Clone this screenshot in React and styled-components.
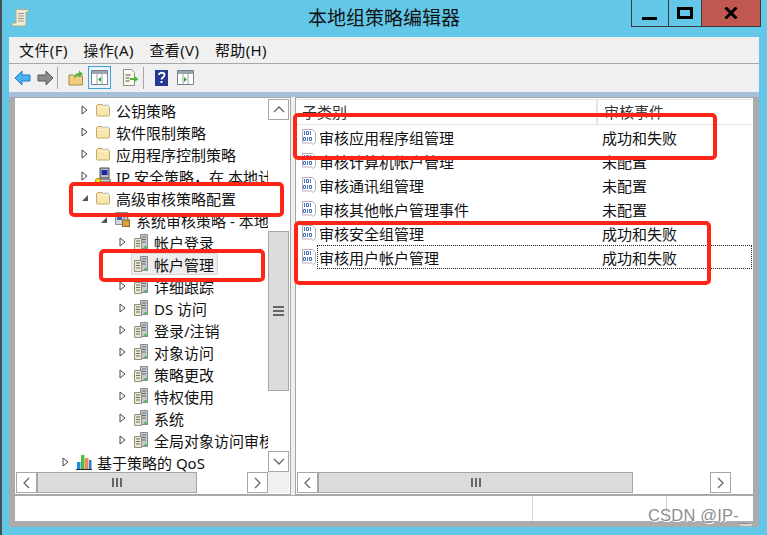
import React from 'react';
import styled, { createGlobalStyle } from 'styled-components';

const GlobalStyle = createGlobalStyle`
html, body { margin: 0; padding: 0; background: #63c8e8; }
* { box-sizing: border-box; }
`;

const Page = styled.div`
position: relative;
width: 767px;
height: 535px;
overflow: hidden;
background: #63c8e8;
border-left: 2px solid #4a4f52;
font-family: "Noto Sans", "Noto Sans CJK SC", sans-serif;
color: #111;
`;

const TitleBar = styled.div`
height: 37px;
display: grid;
grid-template-columns: 297px auto 1fr;
padding-left: 9px;
`;

const AppIcon = styled.div`
padding-top: 8px;
`;

const Title = styled.div`
font-size: 19px;
line-height: 37px;
color: #111;
`;

const WinButtons = styled.div`
justify-self: end;
margin-right: 6px;
height: 27px;
display: flex;
border: 1px solid #3f3a3a;
border-top: none;
`;

const WinButton = styled.div`
width: ${p => p.$w}px;
display: flex;
align-items: center;
justify-content: center;
background: ${p => p.$close ? '#c0584f' : 'transparent'};
border-left: ${p => p.$first ? 'none' : '1px solid #3f3a3a'};
`;

const Client = styled.div`
margin-left: 7px;
width: 750px;
height: 490px;
background: #f0f0f0;
display: flex;
flex-direction: column;
`;

const MenuBar = styled.div`
height: 27px;
display: flex;
gap: 15.5px;
align-items: center;
padding-left: 10px;
font-size: 15px;
letter-spacing: 0.4px;
border-bottom: 1px solid #a9a9a9;
`;

const ToolBar = styled.div`
height: 29px;
display: flex;
align-items: center;
padding-left: 3px;
`;

const ToolSlot = styled.div`
width: ${p => p.$w}px;
height: 23px;
margin-left: ${p => p.$ml || 0}px;
display: flex;
align-items: center;
justify-content: center;
border: ${p => p.$active ? '1px solid #3ea3dc' : 'none'};
background: ${p => p.$active ? '#e8f3fa' : 'transparent'};
`;

const ToolSep = styled.div`
width: 1px;
height: 22px;
margin-left: 1px;
background: #a6a6a6;
`;

const Band = styled.div`
height: 5px;
background: #a5bfdc;
`;

const Frame = styled.div`
flex: 1;
display: flex;
flex-direction: column;
background: #ababab;
padding: 0 5px 6px;
`;

const Panes = styled.div`
height: 398px;
display: flex;
gap: 4px;
background: #f0f0f0;
`;

const Pane = styled.div`
width: ${p => p.$w}px;
display: grid;
grid-template-columns: 1fr 21px;
grid-template-rows: 1fr 21px;
border: 1px solid #a6a6a6;
padding: 1px;
background: #fff;
`;

const TreeBody = styled.div`
overflow: hidden;
min-width: 0;
`;

const TreeRow = styled.div`
height: 22px;
display: flex;
align-items: center;
white-space: nowrap;
font-size: 15px;
padding-left: ${p => 46 + p.$level * 19}px;
`;

const ArrowSlot = styled.div`
width: 12px;
flex: none;
display: flex;
align-items: center;
`;

const TreeItem = styled.div`
height: 22px;
display: flex;
align-items: center;
gap: 5px;
padding: 0 3px 0 1px;
border: 1px solid ${p => p.$selected ? '#d9d9d9' : 'transparent'};
background: ${p => p.$selected ? '#eeeeee' : 'transparent'};
`;

const VScroll = styled.div`
display: flex;
flex-direction: column;
background: #fff;
`;

const HScroll = styled.div`
display: flex;
background: #fff;
min-width: 0;
`;

const ScrollBtn = styled.div`
flex: none;
width: 21px;
height: 21px;
display: flex;
align-items: center;
justify-content: center;
background: #fff;
border: 1px solid #a6a6a6;
`;

const Track = styled.div`
flex: 1;
background: #fff;
min-width: 0;
min-height: 0;
`;

const Thumb = styled.div`
flex: none;
display: flex;
align-items: center;
justify-content: center;
gap: 2px;
flex-direction: ${p => p.$vertical ? 'column' : 'row'};
width: ${p => p.$vertical ? '21px' : `${p.$size}px`};
height: ${p => p.$vertical ? `${p.$size}px` : '21px'};
margin-top: ${p => p.$vertical ? p.$offset : 0}px;
background: #dcdcdc;
border: 1px solid #a6a6a6;
`;

const Grip = styled.span`
display: block;
background: #666;
width: ${p => p.$vertical ? '11px' : '2px'};
height: ${p => p.$vertical ? '2px' : '9px'};
`;

const Corner = styled.div`
background: #f0f0f0;
`;

const ListBody = styled.div`
min-width: 0;
display: flex;
flex-direction: column;
grid-column: 1 / 3;
font-size: 15px;
`;

const ListHead = styled.div`
height: 26px;
display: grid;
grid-template-columns: 299px 1fr;
align-items: center;
border: 1px solid #e3e3e3;
border-width: 1px 0;
color: #333;
`;

const HeadCell = styled.div`
height: 100%;
line-height: 24px;
padding-left: ${p => p.$pad}px;
border-left: ${p => p.$divided ? '2px solid #e3e3e3' : 'none'};
`;

const ListRow = styled.div`
position: relative;
height: 24px;
display: grid;
grid-template-columns: 301px 1fr;
align-items: center;
padding-left: 4px;
${p => p.$focused && `
&::after {
  content: "";
  position: absolute;
  inset: 0 0 0 20px;
  border: 1px dotted #222;
}
`}
`;

const ListName = styled.div`
display: flex;
align-items: center;
gap: 2px;
`;

const StatusBar = styled.div`
height: 25px;
margin: 1px 1px 0;
background: #fff;
display: grid;
grid-template-columns: 518px 134px 1fr;
`;

const StatusCell = styled.div`
border-right: ${p => p.$last ? 'none' : '1px solid #d6d6d6'};
`;

const RedBox = styled.div`
position: absolute;
left: ${p => p.$x}px;
top: ${p => p.$y}px;
width: ${p => p.$w}px;
height: ${p => p.$h}px;
border: 4px solid #ff2618;
border-radius: 5px;
pointer-events: none;
`;

const Watermark = styled.div`
position: absolute;
left: 646px;
top: 506px;
font-family: "Liberation Sans", sans-serif;
font-size: 16.5px;
letter-spacing: 0.2px;
color: #8d8d8d;
text-shadow: 1px 1px 0 #fff;
`;

const ResizeGrip = styled.div`
position: absolute;
left: 740px;
top: 524px;
width: 10px;
height: 2px;
background: #d4d4d4;
`;

const AppGlyph = () => (
  <svg width="19" height="20" viewBox="0 0 19 20">
    <path d="M5 1.500h11.500c1.500 0 1.500 2.500 0 2.500H15v11c0 2-1 3-2.500 3h-10c-2 0-2-3 0-3H5z" fill="#f3ecd2" stroke="#b5aa8a" />
    <path d="M7 5h6v1H7zM7 7.500h6v1H7zM7 10h6v1H7zM7 12.500h6v1H7z" fill="#8f959a" />
  </svg>
);

const FolderIcon = () => (
  <svg width="16" height="16" viewBox="0 0 16 16">
    <path d="M1.500 3.500l1-1h5l1 1h5l1 1v9l-1 .5h-11l-1-.5z" fill="#f9e5ae" stroke="#c4a86c" />
    <path d="M9 2.500h4.500v1.500H9z" fill="#b9d3e6" />
    <path d="M2.500 5.500h11" stroke="#fdf3d3" />
  </svg>
);

const ServerIcon = () => (
  <svg width="16" height="18" viewBox="0 0 16 18">
    <path d="M7.500 1.500h7v14h-7z" fill="#c3c9cd" stroke="#858b90" />
    <path d="M1.500 5.500h7v11h-7z" fill="#f0e8cc" stroke="#8f8f82" />
    <path d="M9 4h4M9 6.500h4M9 9h4M3 8h4M3 10.500h4M3 13h4" stroke="#666d72" />
    <rect x="11.500" y="13" width="2" height="2" fill="#35b53a" />
  </svg>
);

// paper with two rows of bits, 101 over 010
const BinaryIcon = () => (
  <svg width="16" height="18" viewBox="0 0 16 18">
    <path d="M1.500 1.500h10l3 3v10l-2.500 2-1.500-1.500h-9z" fill="#fff" stroke="#b0b0b0" />
    <path
      d="M3.500 3v4M5.500 3.500h2v3h-2zM9.500 3v4M2.500 9.500h2v3h-2zM6.500 9v4M8.500 9.500h2v3h-2z"
      fill="none"
      stroke="#4a72c8"
    />
  </svg>
);

const SecurityIcon = () => (
  <svg width="16" height="18" viewBox="0 0 16 18">
    <path d="M5 1h9v10H5z" fill="#b9bfc4" stroke="#444" />
    <rect x="6.500" y="3" width="6" height="5" fill="#1a2aa6" />
    <path d="M4 12h11v3H4z" fill="#cfd3d6" stroke="#555" />
    <circle cx="3" cy="14" r="2.600" fill="#f5e21a" stroke="#a89a10" />
  </svg>
);

const AuditIcon = () => (
  <svg width="17" height="18" viewBox="0 0 17 18">
    <path d="M1.500 1.500h12v12h-12z" fill="#d4d6d8" stroke="#8b8f92" />
    <rect x="3" y="4" width="5" height="5" fill="#3a63b8" />
    <rect x="8.500" y="9" width="7" height="6.500" fill="#d5a63c" stroke="#8a6a1e" />
    <path d="M10 9V7.500a2 2 0 0 1 4 0V9" fill="none" stroke="#6e6e6e" />
  </svg>
);

const QosIcon = () => (
  <svg width="16" height="16" viewBox="0 0 16 16">
    <rect x="1" y="8" width="3.500" height="7" fill="#1d8fdb" />
    <rect x="5" y="1" width="3.500" height="14" fill="#53b947" />
    <rect x="9" y="4" width="3.500" height="11" fill="#f08a5d" />
    <rect x="13" y="6" width="2.500" height="9" fill="#2b7fc8" />
    <path d="M0 15.500h16" stroke="#222" />
  </svg>
);

const Expander = ({ open }) => (
  open ? (
    <svg width="8" height="8" viewBox="0 0 8 8"><path d="M7 1v6H1z" fill="#555" /></svg>
  ) : (
    <svg width="7" height="10" viewBox="0 0 7 10"><path d="M1 1l5 4-5 4z" fill="#fff" stroke="#444" /></svg>
  )
);

const Chevron = ({ dir }) => {
  const d = {
    up: 'M2 8l5-5 5 5',
    down: 'M2 3l5 5 5-5',
    left: 'M7 1L2 6l5 5',
    right: 'M2 1l5 5-5 5',
  }[dir];
  const horizontal = dir === 'left' || dir === 'right';
  return (
    <svg width={horizontal ? 9 : 14} height={horizontal ? 12 : 11} viewBox={horizontal ? '0 0 9 12' : '0 0 14 11'}>
      <path d={d} fill="none" stroke="#666" strokeWidth="1.300" />
    </svg>
  );
};

const ArrowButton = ({ color, dir }) => (
  <svg width="17" height="16" viewBox="0 0 17 16">
    <path
      d={dir === 'left' ? 'M1 8l7-7v4h8v6H8v4z' : 'M16 8L9 1v4H1v6h8v4z'}
      fill={color}
      stroke={dir === 'left' ? '#1c7fc4' : '#5a5a5a'}
    />
  </svg>
);

const PanelIcon = ({ flip }) => (
  <svg width="17" height="15" viewBox="0 0 17 15">
    <path d="M.5 .5h16v14H.5z" fill="#fff" stroke="#77808a" />
    <path d="M1 1h15v3H1z" fill="#9aa4ad" />
    <path d="M6 4v10M11 4v10" stroke="#9aa4ad" />
    <path d={flip ? 'M7 7l3 2.500L7 12z' : 'M10 7L7 9.500l3 2.500z'} fill="#2fa52f" />
  </svg>
);

const UpFolderIcon = () => (
  <svg width="16" height="17" viewBox="0 0 16 17">
    <path d="M1 6h5l1 1h7.500v9H1z" fill="#f0cf7c" stroke="#a78d4c" />
    <path d="M6 10c0-4 2-6 5-6V1.500L15 5l-4 3.500V6.500c-2 0-4 1-5 3.500z" fill="#4fb83e" />
  </svg>
);

const ExportIcon = () => (
  <svg width="17" height="17" viewBox="0 0 17 17">
    <path d="M1.500 .5h8l3 3v13h-11z" fill="#fbf8e8" stroke="#8d8d8d" />
    <path d="M3.500 6h5M3.500 9h4M3.500 12h4" stroke="#555" />
    <path d="M8 9h4V6.500l4.500 3.500-4.500 3.500V11H8z" fill="#4fb83e" />
  </svg>
);

const HelpIcon = () => (
  <svg width="13" height="16" viewBox="0 0 13 16">
    <rect width="13" height="16" fill="#24398f" />
    <path d="M4 5c0-3 5.500-3 5.500 0 0 2-3 2.500-3 4.500" fill="none" stroke="#fff" strokeWidth="1.800" />
    <rect x="5.500" y="11" width="2" height="2" fill="#fff" />
  </svg>
);

const treeRows = [
  { level: 1, label: '公钥策略', icon: FolderIcon },
  { level: 1, label: '软件限制策略', icon: FolderIcon },
  { level: 1, label: '应用程序控制策略', icon: FolderIcon },
  { level: 1, label: 'IP 安全策略，在 本地计算机', icon: SecurityIcon },
  { level: 1, label: '高级审核策略配置', icon: FolderIcon, open: true },
  { level: 2, label: '系统审核策略 - 本地组策略对象', icon: AuditIcon, open: true },
  { level: 3, label: '帐户登录', icon: ServerIcon },
  { level: 3, label: '帐户管理', icon: ServerIcon, selected: true, leaf: true },
  { level: 3, label: '详细跟踪', icon: ServerIcon },
  { level: 3, label: 'DS 访问', icon: ServerIcon },
  { level: 3, label: '登录/注销', icon: ServerIcon },
  { level: 3, label: '对象访问', icon: ServerIcon },
  { level: 3, label: '策略更改', icon: ServerIcon },
  { level: 3, label: '特权使用', icon: ServerIcon },
  { level: 3, label: '系统', icon: ServerIcon },
  { level: 3, label: '全局对象访问审核', icon: ServerIcon },
  { level: 0, label: '基于策略的 QoS', icon: QosIcon },
];

const listRows = [
  { name: '审核应用程序组管理', state: '成功和失败' },
  { name: '审核计算机帐户管理', state: '未配置' },
  { name: '审核通讯组管理', state: '未配置' },
  { name: '审核其他帐户管理事件', state: '未配置' },
  { name: '审核安全组管理', state: '成功和失败' },
  { name: '审核用户帐户管理', state: '成功和失败', focused: true },
];

const HBar = ({ thumb }) => (
  <HScroll>
    <ScrollBtn><Chevron dir="left" /></ScrollBtn>
    <Thumb $size={thumb}>
      {[0, 1, 2].map(i => <Grip key={i} />)}
    </Thumb>
    <Track />
    <ScrollBtn><Chevron dir="right" /></ScrollBtn>
  </HScroll>
);

export default function App() {
  return (
    <Page>
      <GlobalStyle />
      <TitleBar>
        <AppIcon><AppGlyph /></AppIcon>
        <Title>本地组策略编辑器</Title>
        <WinButtons>
          <WinButton $w={36} $first>
            <svg width="16" height="16" viewBox="0 0 16 16"><rect y="12" width="15" height="3" fill="#000" /></svg>
          </WinButton>
          <WinButton $w={33}>
            <svg width="16" height="12" viewBox="0 0 16 12"><path d="M1.500 1.500h13v9h-13z" fill="none" stroke="#000" strokeWidth="3" /></svg>
          </WinButton>
          <WinButton $w={59} $close>
            <svg width="14" height="12" viewBox="0 0 14 12"><path d="M1.500 .5l11 11M12.500 .5l-11 11" stroke="#000" strokeWidth="3" /></svg>
          </WinButton>
        </WinButtons>
      </TitleBar>
      <Client>
        <MenuBar>
          <span>文件(F)</span>
          <span>操作(A)</span>
          <span>查看(V)</span>
          <span>帮助(H)</span>
        </MenuBar>
        <ToolBar>
          <ToolSlot $w={21}><ArrowButton dir="left" color="#4ab2ee" /></ToolSlot>
          <ToolSlot $w={22} $ml={1}><ArrowButton dir="right" color="#8a8a8a" /></ToolSlot>
          <ToolSep />
          <ToolSlot $w={24} $ml={6}><UpFolderIcon /></ToolSlot>
          <ToolSlot $w={23} $active><PanelIcon /></ToolSlot>
          <ToolSlot $w={24} $ml={7}><ExportIcon /></ToolSlot>
          <ToolSep />
          <ToolSlot $w={22} $ml={6}><HelpIcon /></ToolSlot>
          <ToolSlot $w={22} $ml={2}><PanelIcon flip /></ToolSlot>
        </ToolBar>
        <Band />
        <Frame>
          <Panes>
            <Pane $w={277}>
              <TreeBody>
                {treeRows.map(row => (
                  <TreeRow key={row.label} $level={row.level}>
                    <ArrowSlot>{!row.leaf && <Expander open={row.open} />}</ArrowSlot>
                    <TreeItem $selected={row.selected}>
                      <row.icon />
                      <span>{row.label}</span>
                    </TreeItem>
                  </TreeRow>
                ))}
              </TreeBody>
              <VScroll>
                <ScrollBtn><Chevron dir="up" /></ScrollBtn>
                <Thumb $vertical $size={160} $offset={111}>
                  {[0, 1, 2].map(i => <Grip key={i} $vertical />)}
                </Thumb>
                <Track />
                <ScrollBtn><Chevron dir="down" /></ScrollBtn>
              </VScroll>
              <HBar thumb={160} />
              <Corner />
            </Pane>
            <Pane $w={459}>
              <ListBody>
                <ListHead>
                  <HeadCell $pad={5}>子类别</HeadCell>
                  <HeadCell $pad={6} $divided>审核事件</HeadCell>
                </ListHead>
                {listRows.map(row => (
                  <ListRow key={row.name} $focused={row.focused}>
                    <ListName>
                      <BinaryIcon />
                      <span>{row.name}</span>
                    </ListName>
                    <span>{row.state}</span>
                  </ListRow>
                ))}
              </ListBody>
              <HBar thumb={315} />
            </Pane>
          </Panes>
          <StatusBar>
            <StatusCell />
            <StatusCell />
            <StatusCell $last />
          </StatusBar>
        </Frame>
      </Client>
      <RedBox $x={67} $y={182} $w={215} $h={35} />
      <RedBox $x={97} $y={249} $w={166} $h={33} />
      <RedBox $x={291} $y={113} $w={424} $h={47} />
      <RedBox $x={292} $y={221} $w={417} $h={64} />
      <Watermark>CSDN @IP-_</Watermark>
      <ResizeGrip />
    </Page>
  );
}
